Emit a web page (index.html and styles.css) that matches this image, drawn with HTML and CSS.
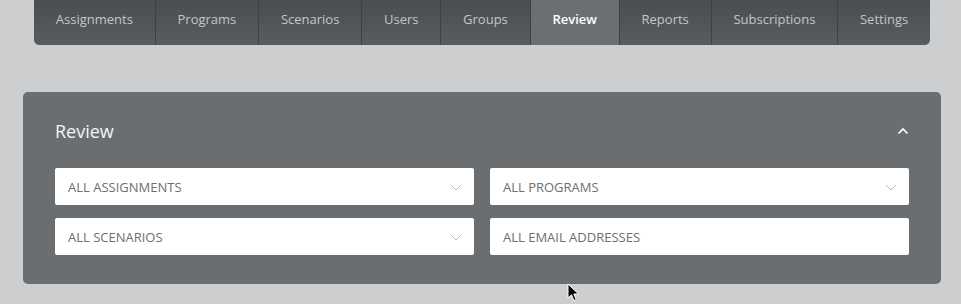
FILE: index.html
```html
<!DOCTYPE html>
<html lang="en">
<head>
    <meta charset="UTF-8">
    <meta name="viewport" content="width=device-width, initial-scale=1.0">
    <title>Review</title>
    <link rel="stylesheet" href="styles.css">
</head>
<body>
    <div class="tabs">
        <div class="tab">Assignments</div>
        <div class="tab">Programs</div>
        <div class="tab">Scenarios</div>
        <div class="tab">Users</div>
        <div class="tab">Groups</div>
        <div class="tab active">Review</div>
        <div class="tab">Reports</div>
        <div class="tab">Subscriptions</div>
        <div class="tab">Settings</div>
    </div>

    <div class="panel">
        <div class="panel-head">
            <div class="panel-title">Review</div>
            <svg class="collapse" width="12" height="8" viewBox="0 0 12 8">
                <path d="M1.5 6.5 L6 2 L10.5 6.5" fill="none" stroke="#fff" stroke-width="1.6"/>
            </svg>
        </div>
        <div class="filters">
            <div class="field">
                <span>ALL ASSIGNMENTS</span>
                <svg class="caret" width="12" height="7" viewBox="0 0 12 7">
                    <path d="M1 1 L6 6 L11 1" fill="none" stroke="#b9b9b9" stroke-width="1"/>
                </svg>
            </div>
            <div class="field">
                <span>ALL PROGRAMS</span>
                <svg class="caret" width="12" height="7" viewBox="0 0 12 7">
                    <path d="M1 1 L6 6 L11 1" fill="none" stroke="#b9b9b9" stroke-width="1"/>
                </svg>
            </div>
            <div class="field">
                <span>ALL SCENARIOS</span>
                <svg class="caret" width="12" height="7" viewBox="0 0 12 7">
                    <path d="M1 1 L6 6 L11 1" fill="none" stroke="#b9b9b9" stroke-width="1"/>
                </svg>
            </div>
            <div class="field">
                <span>ALL EMAIL ADDRESSES</span>
            </div>
        </div>
    </div>

    <svg class="cursor" width="14" height="20" viewBox="0 0 14 20">
        <path d="M1 1 L1 15 L4.5 11.8 L7 17.5 L9.2 16.5 L6.8 11 L11.5 11 Z" fill="#000" stroke="#fff" stroke-width="1"/>
    </svg>
</body>
</html>
```

FILE: styles.css
```css
body {
    margin: 0;
    background-color: #cdcecf;
    font-family: "Open Sans", Arial, sans-serif;
    position: relative;
    height: 304px;
    overflow: hidden;
}
.tabs {
    display: flex;
    width: 896px;
    height: 45px;
    margin-left: 34px;
    background: linear-gradient(#4a4e51, #585c5f);
    border-radius: 0 0 5px 5px;
    overflow: hidden;
}
.tab {
    flex: 1 1 auto;
    display: flex;
    align-items: center;
    justify-content: center;
    padding: 0 10px 8px;
    font-size: 13px;
    color: #c3c6c8;
    border-left: 1px solid #3e4144;
    white-space: nowrap;
}
.tab:first-child {
    border-left: none;
}
.tab.active {
    background-color: #6c6f72;
    color: #fff;
    font-weight: 600;
}
.panel {
    width: 854px;
    margin: 47px 0 0 23px;
    padding: 22px 32px 29px;
    background-color: #6b6e71;
    border-radius: 5px;
}
.panel-head {
    display: flex;
    align-items: center;
    justify-content: space-between;
    height: 34px;
    margin-bottom: 20px;
}
.panel-title {
    font-size: 18px;
    color: #f4f4f4;
}
.filters {
    display: grid;
    grid-template-columns: 1fr 1fr;
    gap: 13px 16px;
}
.field {
    display: flex;
    align-items: center;
    justify-content: space-between;
    height: 37px;
    padding: 0 12px 0 13px;
    background-color: #fff;
    border-radius: 2px;
    font-size: 13px;
    color: #6e6e6e;
}
.caret {
    margin-top: 1px;
}
.cursor {
    position: absolute;
    left: 567px;
    top: 283px;
}
```
